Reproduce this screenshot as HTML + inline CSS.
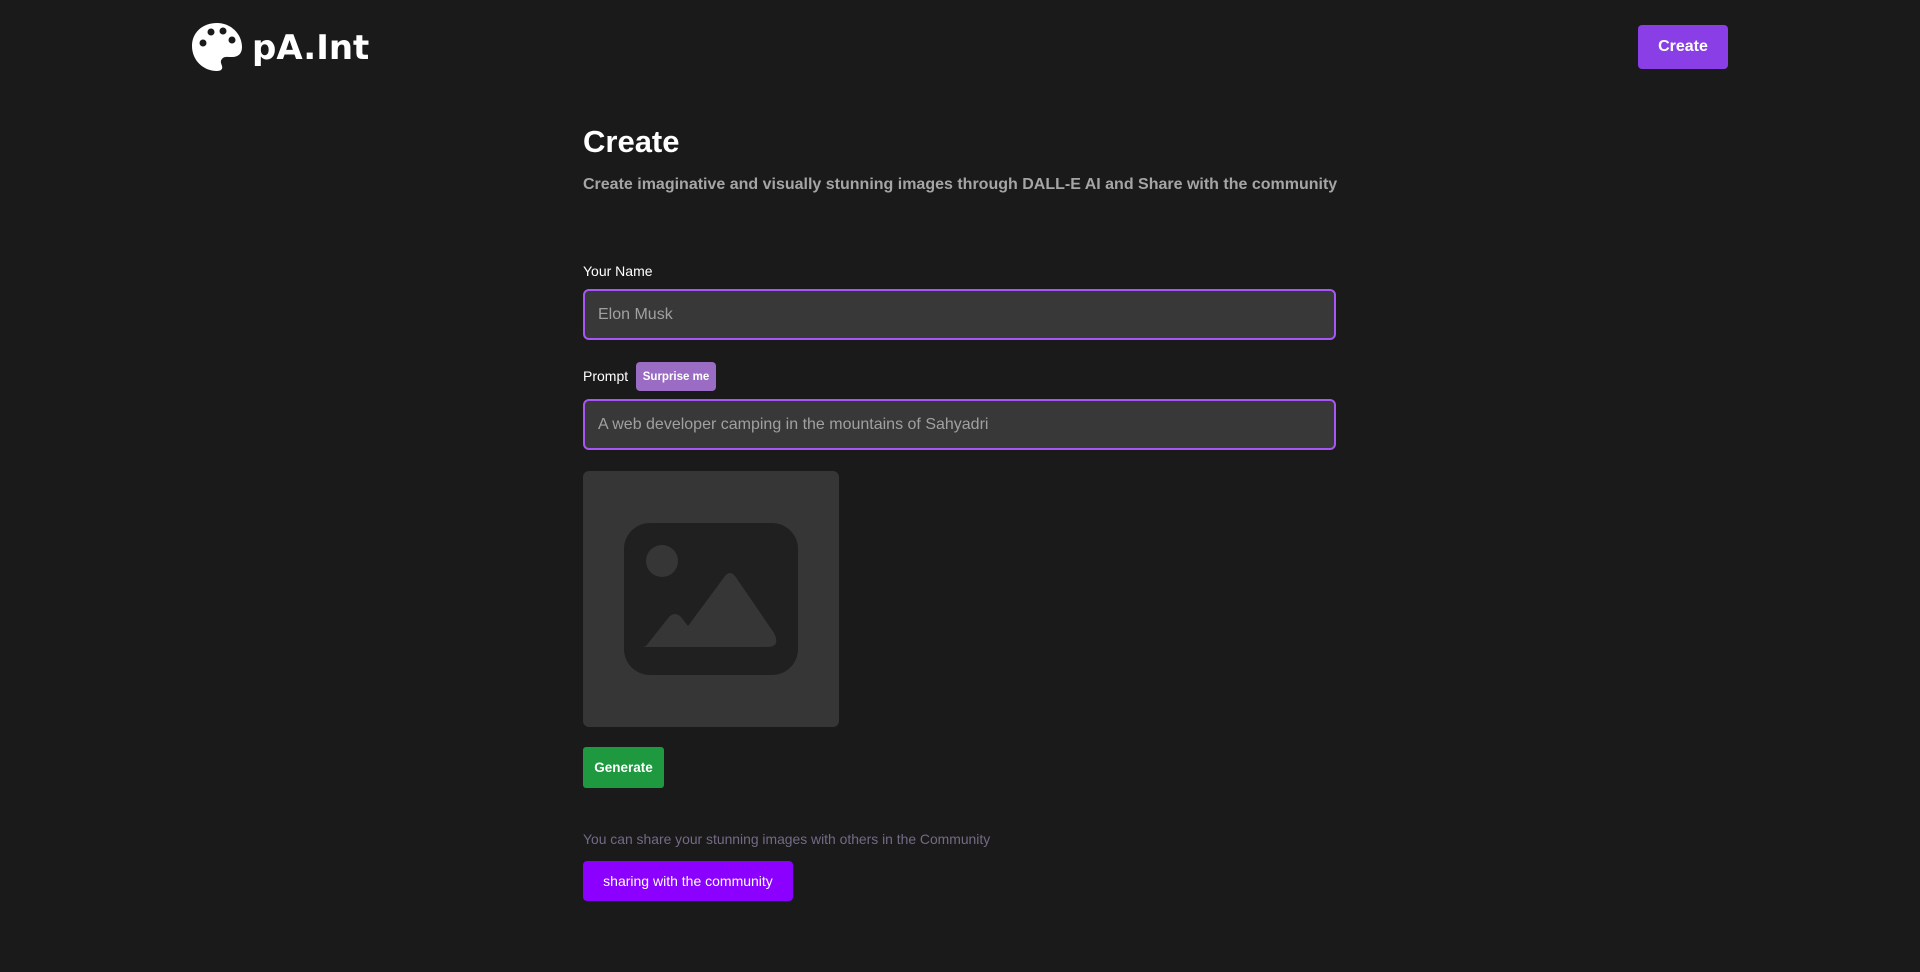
<!DOCTYPE html>
<html><head><meta charset="utf-8"><style>
*{box-sizing:border-box;margin:0;padding:0}
body{width:1920px;height:972px;background:#1a1a1a;font-family:"Liberation Sans",Arial,sans-serif;position:relative;overflow:hidden;color:#fff}
.abs{position:absolute}
.logo-t{left:252px;top:28px;font-family:"Comic Sans MS","DejaVu Sans",sans-serif;font-size:34px;font-weight:bold;color:#fff}
.hbtn{left:1638px;top:25px;width:90px;height:44px;background:#8a3ee6;border-radius:4px;font-weight:bold;font-size:16px;display:flex;align-items:center;justify-content:center}
h1{position:absolute;left:583px;top:124px;font-size:31px;font-weight:bold}
.sub{left:583px;top:176px;font-size:16px;font-weight:bold;color:#a5a5a5}
.lbl{font-size:14px;color:#fff}
.inp{left:583px;width:753px;height:51px;border:2px solid #a855f7;border-radius:6px;background:#383838;color:#a0a0a0;font-size:16px;padding-left:13px;display:flex;align-items:center}
.sbtn{left:636px;top:362px;width:80px;height:29px;background:#9b6cc4;border-radius:4px;font-size:11.5px;font-weight:bold;display:flex;align-items:center;justify-content:center}
.img{left:583px;top:471px;width:256px;height:256px;background:#363636;border-radius:6px}
.gen{left:583px;top:747px;width:81px;height:41px;background:#1e993f;border-radius:3px;font-size:13.5px;font-weight:bold;display:flex;align-items:center;justify-content:center}
.note{left:583px;top:831px;font-size:13.9px;color:#746a85}
.share{left:583px;top:861px;width:210px;height:40px;background:#8c00ff;border-radius:4px;font-size:14px;display:flex;align-items:center;justify-content:center}
</style></head><body>
<svg class="abs" style="left:190px;top:21px" width="54" height="52" viewBox="0 0 54 52">
<path d="M27 2C12 2 2 12 2 25c0 14 11 25 25 25 4 0 6-2 5-5-1-3-2-5 0-7 2-3 6-2 10-2 7 0 10-4 10-10C52 13 41 2 27 2z" fill="#fff"/>
<circle cx="13" cy="22" r="3.5" fill="#1a1a1a"/><circle cx="21" cy="11" r="3.5" fill="#1a1a1a"/><circle cx="33" cy="10" r="3.5" fill="#1a1a1a"/><circle cx="42" cy="19" r="3.5" fill="#1a1a1a"/>
</svg>
<div class="abs logo-t">pA.Int</div>
<div class="abs hbtn">Create</div>
<h1>Create</h1>
<div class="abs sub">Create imaginative and visually stunning images through DALL-E AI and Share with the community</div>
<div class="abs lbl" style="left:583px;top:263px">Your Name</div>
<div class="abs inp" style="top:289px">Elon Musk</div>
<div class="abs lbl" style="left:583px;top:368px">Prompt</div>
<div class="abs sbtn">Surprise me</div>
<div class="abs inp" style="top:399px">A web developer camping in the mountains of Sahyadri</div>
<div class="abs img">
<svg width="256" height="256" viewBox="0 0 256 256" style="position:absolute;left:0;top:0">
<rect x="41" y="52" width="174" height="152" rx="26" fill="#202020"/>
<circle cx="79" cy="90" r="16" fill="#363636"/>
<path d="M63 175 L86 146 Q92 140 98 146 L105 155 L142 105 Q147 99 152 105 L191 162 Q198 176 184 176 L71 176 Q56 176 63 175Z" fill="#363636"/>
</svg>
</div>
<div class="abs gen">Generate</div>
<div class="abs note">You can share your stunning images with others in the Community</div>
<div class="abs share">sharing with the community</div>
</body></html>
